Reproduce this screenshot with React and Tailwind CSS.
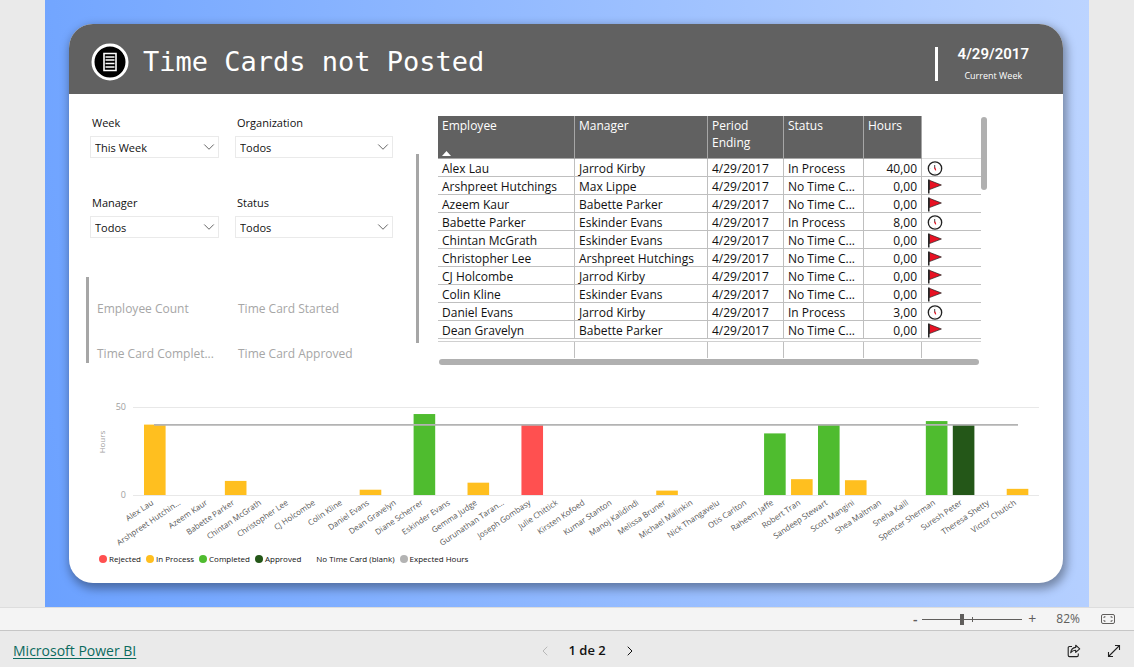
import { ChevronDown, ChevronLeft, ChevronRight } from 'lucide-react'

const YELLOW = '#FFBF1F'
const GREEN = '#4FBC2F'
const RED = '#FF5050'
const DARK = '#245718'

const filters = [
    { id: 'week', label: 'Week', value: 'This Week' },
    { id: 'organization', label: 'Organization', value: 'Todos' },
    { id: 'manager', label: 'Manager', value: 'Todos' },
    { id: 'status', label: 'Status', value: 'Todos' },
]

const kpis = ['Employee Count', 'Time Card Started', 'Time Card Complet...', 'Time Card Approved']

const rows = [
    ['Alex Lau', 'Jarrod Kirby', 'In Process', '40,00'],
    ['Arshpreet Hutchings', 'Max Lippe', 'No Time C...', '0,00'],
    ['Azeem Kaur', 'Babette Parker', 'No Time C...', '0,00'],
    ['Babette Parker', 'Eskinder Evans', 'In Process', '8,00'],
    ['Chintan McGrath', 'Eskinder Evans', 'No Time C...', '0,00'],
    ['Christopher Lee', 'Arshpreet Hutchings', 'No Time C...', '0,00'],
    ['CJ Holcombe', 'Jarrod Kirby', 'No Time C...', '0,00'],
    ['Colin Kline', 'Eskinder Evans', 'No Time C...', '0,00'],
    ['Daniel Evans', 'Jarrod Kirby', 'In Process', '3,00'],
    ['Dean Gravelyn', 'Babette Parker', 'No Time C...', '0,00'],
]

const hours = [
    ['Alex Lau', 40, YELLOW],
    ['Arshpreet Hutchin...'],
    ['Azeem Kaur'],
    ['Babette Parker', 8, YELLOW],
    ['Chintan McGrath'],
    ['Christopher Lee'],
    ['CJ Holcombe'],
    ['Colin Kline'],
    ['Daniel Evans', 3, YELLOW],
    ['Dean Gravelyn'],
    ['Diane Scherrer', 46, GREEN],
    ['Eskinder Evans'],
    ['Gemma Judge', 7, YELLOW],
    ['Gurunathan Taran...'],
    ['Joseph Gombasy', 40, RED],
    ['Julie Chittick'],
    ['Kirsten Kofoed'],
    ['Kumar Stanton'],
    ['Manoj Kalidindi'],
    ['Melissa Bruner', 2.5, YELLOW],
    ['Michael Malinkin'],
    ['Nick Thangavelu'],
    ['Otis Carlton'],
    ['Raheem Jaffe', 35, GREEN],
    ['Robert Tran', 9, YELLOW],
    ['Sandeep Stewart', 40, GREEN],
    ['Scott Mangini', 8.4, YELLOW],
    ['Shea Maltman'],
    ['Sneha Kaill'],
    ['Spencer Sherman', 42, GREEN],
    ['Suresh Peter', 40, DARK],
    ['Theresa Shetty'],
    ['Victor Chutich', 3.5, YELLOW],
]

const legend = [
    ['Rejected', 'bg-[#FF5050]'],
    ['In Process', 'bg-[#FFBF1F]'],
    ['Completed', 'bg-[#4FBC2F]'],
    ['Approved', 'bg-[#245718]'],
    ['No Time Card (blank)', 'bg-white'],
    ['Expected Hours', 'bg-[#B3B3B3]'],
]

function ClockIcon() {
    return (
        <svg width="16" height="16" viewBox="0 0 16 16" fill="none">
            <circle cx="8" cy="8.5" r="6.7" fill="#fff" stroke="#222" strokeWidth="1.3" />
            <path d="M8 3v1M8 13v1M2.5 8.5h1M12.5 8.5h1" stroke="#ccc" strokeWidth="0.8" />
            <path d="M7.7 5v3.6" stroke="#444" strokeWidth="1" />
            <path d="M7.7 7.6l1 2.8" stroke="#E81123" strokeWidth="1.3" />
        </svg>
    )
}

function FlagIcon() {
    return (
        <svg width="16" height="16" viewBox="0 0 16 16">
            <path d="M2.4 2.3L14.4 7 2.4 11.6z" fill="#E81123" stroke="#222" strokeWidth="0.7" />
            <path d="M1.8 1.5v14" stroke="#111" strokeWidth="1.4" />
        </svg>
    )
}

function Header() {
    return (
        <header className="flex h-[70px] items-center bg-[#616161] pl-[22px] pr-[34px] text-white">
            <svg width="38" height="38" viewBox="0 0 38 38" className="mt-1.5">
                <circle cx="19" cy="19" r="17" fill="#000" stroke="#fff" strokeWidth="3" />
                <path d="M13 10.5h12v17H13z" fill="#000" stroke="#fff" strokeWidth="1.6" />
                <path d="M14.5 14h9M14.5 17h9M14.5 20.5h9M14.5 24h9" stroke="#fff" strokeWidth="1.5" />
            </svg>
            <h1 className="ml-3.5 mt-1.5 flex-1 font-['DejaVu_Sans_Mono',monospace] text-[27px] leading-8">Time Cards not Posted</h1>
            <div className="mt-2.5 h-[34px] w-[3px] bg-white" />
            <div className="ml-5 mt-2.5 text-center">
                <p className="font-[Roboto,sans-serif] text-[15px] font-semibold leading-5">4/29/2017</p>
                <p className="mt-1 text-[9px] leading-4">Current Week</p>
            </div>
        </header>
    )
}

function Filters() {
    return (
        <div className="w-[307px]">
            <div className="ml-1 grid grid-cols-[129px_158px] gap-x-4 gap-y-[38px]">
                {filters.map((filter) => (
                    <div key={filter.id}>
                        <label htmlFor={filter.id} className="ml-0.5 block text-[11px] leading-[14px]">
                            {filter.label}
                        </label>
                        <div className="relative mt-1.5">
                            <select
                                id={filter.id}
                                className="block h-[22px] w-full appearance-none border border-[#EAEAEA] bg-white px-1 pt-0.5 text-[11px] outline-none"
                            >
                                <option>{filter.value}</option>
                            </select>
                            <ChevronDown
                                size={18}
                                strokeWidth={1}
                                className="pointer-events-none absolute right-px top-0.5 text-[#333]"
                            />
                        </div>
                    </div>
                ))}
            </div>

            {/* KPI labels */}
            <div className="mt-[39px] grid grid-cols-[141px_1fr] gap-y-[27px] border-l-[3px] border-[#A6A6A6] pl-2 pt-[23px]">
                {kpis.map((kpi) => (
                    <p key={kpi} className="whitespace-nowrap text-[12px] leading-[18px] text-[#A6A6A6]">
                        {kpi}
                    </p>
                ))}
            </div>
        </div>
    )
}

function EmployeeTable() {
    const cell = 'h-[18px] border-b border-r border-[#BFBFBF] px-1 pt-0.5 pb-0 leading-[15px]'
    const head = 'border-b border-r border-[#A6A6A6] bg-[#616161] px-1 font-normal text-white'

    return (
        <div className="ml-[19px]">
            <div className="flex">
                <table className="w-[543px] table-fixed border-separate border-spacing-0 whitespace-nowrap text-left text-[12px]">
                    <colgroup>
                        <col className="w-[137px]" />
                        <col className="w-[133px]" />
                        <col className="w-[76px]" />
                        <col className="w-[80px]" />
                        <col className="w-[58px]" />
                        <col className="w-[59px]" />
                    </colgroup>
                    <thead>
                        <tr className="h-[43px] align-top leading-[17px]">
                            <th className={head}>
                                <div className="flex h-[42px] flex-col justify-between pt-px pb-0.5">
                                    Employee
                                    <svg width="9" height="5" viewBox="0 0 9 5">
                                        <path d="M4.5 0L9 5H0z" fill="#fff" />
                                    </svg>
                                </div>
                            </th>
                            <th className={head}><div className="pt-px">Manager</div></th>
                            <th className={head}><div className="whitespace-normal pt-px">Period Ending</div></th>
                            <th className={head}><div className="pt-px">Status</div></th>
                            <th className={head}><div className="pt-px">Hours</div></th>
                            <th className="border-b border-[#E0E0E0]" />
                        </tr>
                    </thead>
                    <tbody>
                        {rows.map(([employee, manager, status, value]) => (
                            <tr key={employee}>
                                <td className={cell}>{employee}</td>
                                <td className={cell}>{manager}</td>
                                <td className={cell}>4/29/2017</td>
                                <td className={cell}>{status}</td>
                                <td className={`${cell} text-right`}>{value}</td>
                                <td className="h-[18px] border-b border-[#BFBFBF] pl-[5px]">
                                    {status === 'In Process' ? <ClockIcon /> : <FlagIcon />}
                                </td>
                            </tr>
                        ))}
                    </tbody>
                    <tfoot>
                        <tr className="h-[3px]">
                            <td colSpan={6} className="border-b border-[#D0D0D0]" />
                        </tr>
                        <tr className="h-4">
                            {[0, 1, 2, 3, 4].map((i) => (
                                <td key={i} className="border-r border-[#BFBFBF]" />
                            ))}
                            <td />
                        </tr>
                    </tfoot>
                </table>
                <div className="mt-px h-[73px] w-1.5 rounded-full bg-[#B0B0B0]" />
            </div>
            <div className="ml-px mt-px h-1.5 w-[540px] rounded-full bg-[#B0B0B0]" />
        </div>
    )
}

function HoursChart() {
    // one unit of hours is 1.76px, the zero line sits at y=95
    const y = (value) => 95 - value * 1.76
    const x = (i) => 58 + i * 26.96

    return (
        <svg viewBox="0 0 960 150" className="mt-[35px] w-full" fontSize="8">
            <path d="M47 7.5h906M47 95.5h906" stroke="#E8E8E8" />
            <g fill="#A0A0A0">
                <text x="40" y="10" textAnchor="end" fontSize="9">50</text>
                <text x="40" y="98" textAnchor="end" fontSize="9">0</text>
                <text transform="translate(19 42) rotate(-90)" textAnchor="middle">Hours</text>
            </g>
            {hours.map(([name, value, color], i) => (
                <g key={name}>
                    {value && <rect x={x(i)} y={y(value)} width="21.6" height={95 - y(value)} fill={color} />}
                    <text transform={`translate(${x(i) + 10} 104) rotate(-34)`} textAnchor="end" fill="#555">
                        {name}
                    </text>
                </g>
            ))}
            <path d="M68 24.8h864" stroke="#B3B3B3" strokeWidth="1.8" />
        </svg>
    )
}

function Legend() {
    return (
        <ul className="ml-[13px] mt-px flex h-4 items-center gap-[5px] text-[8px]">
            {legend.map(([name, dot]) => (
                <li key={name} className="flex items-center gap-0.5 whitespace-nowrap">
                    <span className={`size-2 rounded-full ${dot}`} />
                    {name}
                </li>
            ))}
        </ul>
    )
}

function ZoomBar() {
    return (
        <div className="flex h-6 items-center justify-end border-b border-t border-b-[#C6C6C6] border-t-[#DDDDDD] bg-[#F4F4F4] pr-[18px] text-[#605E5C]">
            <button type="button" aria-label="Zoom out" className="w-3.5 text-[14px] font-semibold leading-4">-</button>
            <div className="relative flex h-4 w-[100px] items-center">
                <input
                    type="range"
                    aria-label="Zoom"
                    defaultValue="39"
                    className="h-4 w-full appearance-none bg-transparent [&::-webkit-slider-runnable-track]:h-px [&::-webkit-slider-runnable-track]:bg-[#605E5C] [&::-webkit-slider-thumb]:-mt-[5px] [&::-webkit-slider-thumb]:h-[11px] [&::-webkit-slider-thumb]:w-1 [&::-webkit-slider-thumb]:appearance-none [&::-webkit-slider-thumb]:bg-[#605E5C]"
                />
                <span className="pointer-events-none absolute left-1/2 top-1.5 h-[5px] w-px bg-[#605E5C]" />
            </div>
            <button type="button" aria-label="Zoom in" className="w-5 text-[14px] leading-4">+</button>
            <span className="ml-3.5 text-[12px]">82%</span>
            <button type="button" aria-label="Fit to page" className="ml-5">
                <svg width="16" height="12" viewBox="0 0 16 12" fill="none" stroke="#605E5C">
                    <rect x="1.5" y="1.5" width="13" height="9" rx="1.5" />
                    <path d="M4 5V3.8h1.5M10.5 3.8H12V5M12 7v1.2h-1.5M5.5 8.2H4V7" />
                </svg>
            </button>
        </div>
    )
}

function Footer() {
    return (
        <footer className="flex h-9 items-center justify-between pl-[13px] pt-[3px]">
            <a href="#" className="text-[14px] text-[#0B6A5E] underline underline-offset-2">Microsoft Power BI</a>
            <nav className="flex items-center gap-4">
                <button type="button" aria-label="Previous page" className="text-[#B8B8B8]">
                    <ChevronLeft size={16} strokeWidth={1.5} />
                </button>
                <span className="text-[13px] font-semibold">1 de 2</span>
                <button type="button" aria-label="Next page">
                    <ChevronRight size={16} strokeWidth={1.5} />
                </button>
            </nav>
            <div className="ml-4 flex">
                <button type="button" aria-label="Share" className="flex w-10 justify-center">
                    <svg width="14" height="14" viewBox="0 0 14 14" fill="none" stroke="#222" strokeWidth="1.1" strokeLinejoin="round">
                        <path d="M5 2.5H2.5a1.3 1.3 0 0 0-1.3 1.3v7.5a1.3 1.3 0 0 0 1.3 1.3H10a1.3 1.3 0 0 0 1.3-1.3V9.5" />
                        <path d="M8.7 1.2l4 3.6-4 3.6V6.3c-2.3 0-3.8.7-5 2.4.3-2.8 1.9-5 5-5.3z" />
                    </svg>
                </button>
                <button type="button" aria-label="Full screen" className="flex w-10 justify-center">
                    <svg width="14" height="14" viewBox="0 0 14 14" fill="none" stroke="#222" strokeWidth="1.1">
                        <path d="M1.5 12.5l11-11M8 1.5h4.5V6M1.5 8v4.5H6" />
                    </svg>
                </button>
            </div>
        </footer>
    )
}

export default function App() {
    return (
        <div className="flex min-h-screen flex-col bg-[#EAEAEA] font-['Open_Sans','Noto_Sans',sans-serif] text-[#111]">
            <main className="mx-[45px] flex-1 bg-[linear-gradient(80deg,#6BA1FF,#BCD4FF)] pb-6 pl-6 pr-[26px] pt-6">
                <div className="overflow-hidden rounded-3xl bg-white shadow-[2px_4px_10px_2px_rgba(0,0,0,0.35)]">
                    <Header />
                    <div className="px-[17px] pb-4 pt-[22px]">
                        <div className="flex items-start">
                            <Filters />
                            <div className="ml-[23px] mt-[38px] h-[189px] w-[3px] shrink-0 bg-[#A6A6A6]" />
                            <EmployeeTable />
                        </div>
                        <HoursChart />
                        <Legend />
                    </div>
                </div>
            </main>
            <ZoomBar />
            <Footer />
        </div>
    )
}
